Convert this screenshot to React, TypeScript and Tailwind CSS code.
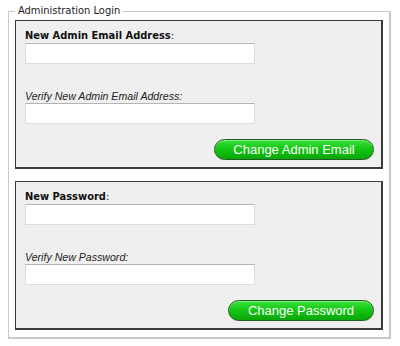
import React from "react";

function Box({
  label,
  verify,
  button,
  btnWidth,
  top,
}: {
  label: string;
  verify: string;
  button: string;
  btnWidth: string;
  top: string;
}) {
  return (
    <div
      className={`${top} flex flex-col border border-[#3a3a3a] border-r-2 border-b-2 bg-[#efefef] pl-[9px] pr-[7px] pt-[8px] pb-[7px]`}
    >
      <div className="h-[14px] text-[11px] leading-[14px] text-[#111] [font-family:'DejaVu_Sans_Condensed','DejaVu_Sans',sans-serif]">
        <span className="font-bold">{label}</span>:
      </div>
      <input
        type="text"
        className="h-[21px] w-[230px] border border-[#dcdcdc] border-t-[#b4b4b4] bg-white outline-none"
      />
      <div className="mt-[25px] h-[14px] text-[10.6px] italic leading-[14px] text-[#222] [font-family:'Liberation_Sans',Arial,sans-serif]">
        {verify}
      </div>
      <input
        type="text"
        className="h-[21px] w-[230px] border border-[#dcdcdc] border-t-[#b4b4b4] bg-white outline-none"
      />
      <div className="mt-[15px] flex justify-end">
        <button
          className={`${btnWidth} h-[21px] rounded-full border border-[#1f5f1f] bg-[linear-gradient(to_bottom,#3ee03e_0%,#14c814_45%,#0aa50a_100%)] text-[13px] leading-[19px] text-white [font-family:'Liberation_Sans',Arial,sans-serif] shadow-[inset_0_1px_0_rgba(255,255,255,0.35)]`}
        >
          {button}
        </button>
      </div>
    </div>
  );
}

export default function App() {
  return (
    <div className="h-[346px] w-[400px] bg-white">
      <fieldset className="ml-[8px] mt-[4px] w-[383px] border border-[#c9c9c9] border-r-2 border-b-2 pl-[6px] pr-[6px] pb-[7px]">
        <legend className="ml-0 px-[3px] text-[11px] leading-[14px] text-[#222] [font-family:'DejaVu_Sans_Condensed','DejaVu_Sans',sans-serif]">
          Administration Login
        </legend>
        <Box
          top="mt-[2px]"
          label="New Admin Email Address"
          verify="Verify New Admin Email Address:"
          button="Change Admin Email"
          btnWidth="w-[160px]"
        />
        <Box
          top="mt-[12px]"
          label="New Password"
          verify="Verify New Password:"
          button="Change Password"
          btnWidth="w-[146px]"
        />
      </fieldset>
    </div>
  );
}
